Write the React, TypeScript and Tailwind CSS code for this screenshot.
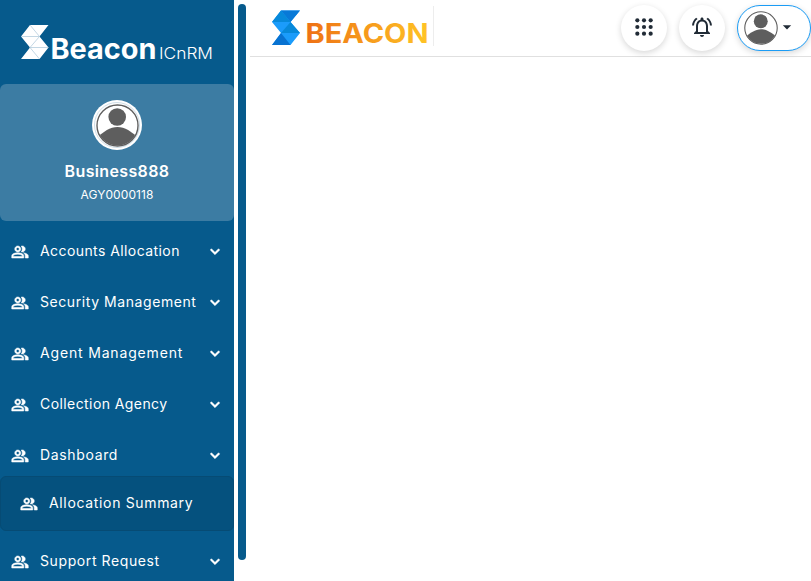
import React from "react";
import { MdArrowDropDown, MdOutlineNotificationsActive } from "react-icons/md";
import { BiChevronDown } from "react-icons/bi";

type Item = { label: string; tracking: string };

const items: Item[] = [
  { label: "Accounts Allocation", tracking: "tracking-[0.42px]" },
  { label: "Security Management", tracking: "tracking-[0.57px]" },
  { label: "Agent Management", tracking: "tracking-[0.83px]" },
  { label: "Collection Agency", tracking: "tracking-[0.42px]" },
  { label: "Dashboard", tracking: "tracking-[0.65px]" },
];

function GroupIcon() {
  return (
    <svg viewBox="0 -960 960 960" fill="currentColor" stroke="currentColor" strokeWidth="28" className="size-[18px] shrink-0">
      <path d="M40-160v-112q0-34 17.500-62.500T104-378q62-31 126-46.500T360-440q66 0 130 15.500T616-378q29 15 46.500 43.500T680-272v112H40Zm720 0v-120q0-44-24.500-84.500T666-434q51 6 96 20.500t84 35.500q36 20 55 44.500t19 53.500v120H760ZM360-480q-66 0-113-47t-47-113q0-66 47-113t113-47q66 0 113 47t47 113q0 66-47 113t-113 47Zm400-160q0 66-47 113t-113 47q-11 0-28-2.500t-28-5.500q27-32 41.500-71t14.500-81q0-42-14.500-81T544-792q14-5 28-6.500t28-1.500q66 0 113 47t47 113ZM120-240h480v-32q0-11-5.500-20T580-306q-54-27-109-40.500T360-360q-56 0-111 13.500T140-306q-9 5-14.500 14t-5.500 20v32Zm240-320q33 0 56.500-23.500T440-640q0-33-23.500-56.500T360-720q-33 0-56.500 23.500T280-640q0 33 23.500 56.500T360-560Z" />
    </svg>
  );
}

function DotsIcon() {
  const steps = [4, 12, 20];
  return (
    <svg viewBox="0 0 24 24" fill="currentColor" className="-mt-[2px] size-5">
      {steps.map((y) => steps.map((x) => <circle key={`${x}-${y}`} cx={x} cy={y} r="2.500" />))}
    </svg>
  );
}

function Avatar({ className }: { className: string }) {
  return (
    <svg viewBox="0 0 44 44" className={className}>
      <defs>
        <clipPath id="face">
          <circle cx="22" cy="22" r="20.5" />
        </clipPath>
      </defs>
      <circle cx="22" cy="22" r="21" fill="#fff" stroke="#5e5e5e" strokeWidth="1.4" />
      <g clipPath="url(#face)" fill="#5e5e5e">
        <circle cx="21.700" cy="13.300" r="9" />
        <path d="M0 35C7 29 14 23.500 22 23.500S37 29 44 35v9H0z" />
      </g>
    </svg>
  );
}

function MenuRow({ item }: { item: Item }) {
  return (
    <li className="flex h-[51px] items-center pl-[11px] pr-[9px]">
      <div className="mt-[3px]">
        <GroupIcon />
      </div>
      <span className={`ml-[11px] grow whitespace-nowrap text-sm ${item.tracking}`}>{item.label}</span>
      <BiChevronDown className="size-5" stroke="currentColor" strokeWidth="0.6" />
    </li>
  );
}

export default function App() {
  return (
    <div className="flex h-[581px] w-[811px] overflow-hidden bg-white font-['Inter',sans-serif]">
      <aside className="h-full w-[234px] shrink-0 overflow-hidden bg-[#065a8c] text-white">
        <div className="h-[84px]">
          <svg width="234" height="84" className="block">
            <path d="M30 25H48.500L39.500 36.500L48.500 47.500L39.500 59H21L30 47.500L21 36.500z" fill="#fff" />
            <path d="M21 36.500H39.500L30 25M30 47.500L39.500 36.500M30 47.500H48.500M30 47.500L39.500 59" fill="none" stroke="#a9c5d8" strokeWidth=".7" />
            <text x="50.500" y="59" textLength="106" lengthAdjust="spacingAndGlyphs" fill="#fff" fontSize="28" fontWeight="700">Beacon</text>
            <text x="159" y="59" textLength="54" lengthAdjust="spacingAndGlyphs" fill="#fff" fontSize="15.500" fontWeight="300">ICnRM</text>
          </svg>
        </div>
        <div className="flex h-[137px] flex-col items-center rounded-md bg-[#3c7ca3] pt-4">
          <div className="flex size-[50px] items-center justify-center rounded-full bg-white">
            <div className="flex size-[46px] items-center justify-center rounded-full border border-[#cfdde6]">
              <Avatar className="size-[43px]" />
            </div>
          </div>
          <div className="mt-[9px] text-base leading-6 font-semibold tracking-[0.36px]">Business888</div>
          <div className="mt-[3px] text-xs leading-[18px] tracking-[0.1px]">AGY0000118</div>
        </div>
        <ul className="pt-[4px]">
          {items.map((item) => (
            <MenuRow key={item.label} item={item} />
          ))}
          <li className="-mt-[4px] flex h-[55px] items-center rounded-md border border-[#064b74] bg-[#05517e] pl-[19px]">
            <div className="mt-px">
              <GroupIcon />
            </div>
            <span className="-mt-px ml-[11px] whitespace-nowrap text-sm tracking-[0.66px]">Allocation Summary</span>
          </li>
          <li className="pt-[4px]">
            <ul>
              <MenuRow item={{ label: "Support Request", tracking: "tracking-[0.6px]" }} />
            </ul>
          </li>
        </ul>
      </aside>
      <div className="ml-1 mt-1 h-[556px] w-2 shrink-0 rounded-full bg-[#065a8c]" />
      <main className="ml-1 grow">
        <header className="flex h-[57px] w-[561px] border-b border-[#e0e0e0]">
          <div className="my-[6px] h-[40px] w-[184px] border-r border-[#ededed]">
            <svg width="183" height="48" className="-mt-[6px] block">
              <defs>
                <linearGradient id="brand">
                  <stop stopColor="#ee7014" />
                  <stop offset="1" stopColor="#ffc425" />
                </linearGradient>
              </defs>
              <g transform="translate(-2.500 0)">
                <path d="M33.500 10.500H52.500L43 22L52.500 33L43 45H24.500L33.500 33L24.500 22z" fill="#1b9cfb" />
                <path d="M33.500 10.500H52.500L43 22z" fill="#0879d7" />
                <path d="M33.500 10.500L43 22H24.500z" fill="#0789da" />
                <path d="M43 22L52.500 33H33.500z" fill="#0789da" />
                <path d="M33.500 33L43 45H24.500z" fill="#0872d1" />
              </g>
              <text x="55.500" y="42.500" textLength="123" lengthAdjust="spacingAndGlyphs" fill="url(#brand)" fontSize="27" fontWeight="700">BEACON</text>
            </svg>
          </div>
          <div className="ml-auto flex pt-[5px] text-[#212b36]">
            <button className="mr-3 flex size-[46px] items-center justify-center rounded-full bg-white shadow-[0_2px_6px_rgba(0,0,0,0.16)]">
              <DotsIcon />
            </button>
            <button className="mr-3 flex size-[46px] items-center justify-center rounded-full bg-white shadow-[0_2px_6px_rgba(0,0,0,0.16)]">
              <MdOutlineNotificationsActive className="-mt-[2px] size-6" />
            </button>
            <button className="flex h-[46px] w-[74px] items-center rounded-full border border-[#1b9cf5] bg-white pl-[6px] shadow-[0_2px_6px_rgba(0,0,0,0.16)]">
              <Avatar className="size-[34px]" />
              <MdArrowDropDown className="-ml-px -mt-[2px] size-5" />
            </button>
          </div>
        </header>
      </main>
    </div>
  );
}
